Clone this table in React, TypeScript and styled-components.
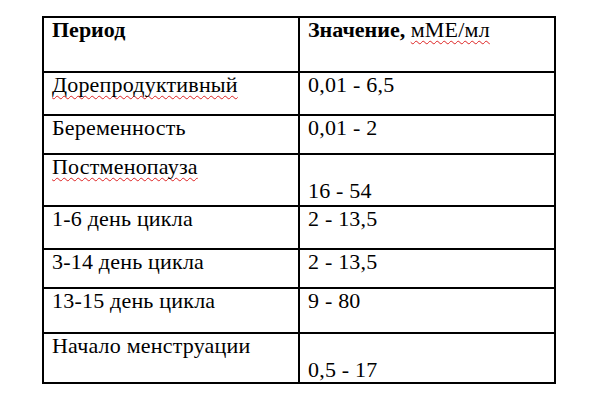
import React from 'react';
import styled, { createGlobalStyle } from 'styled-components';

const GlobalStyle = createGlobalStyle`
  html, body {
    margin: 0;
    padding: 0;
    background: #fff;
  }
  body {
    width: 600px;
    height: 400px;
    overflow: hidden;
    font-family: "Liberation Serif", "Times New Roman", serif;
  }
`;

const Page = styled.div`
  padding: 16px 0 0 42px;
`;

const Table = styled.table`
  border-collapse: collapse;
  width: 514px;
  table-layout: fixed;
  font-family: "Liberation Serif", "Times New Roman", serif;
  font-size: 22px;
  color: #000;
`;

const Row = styled.tr<{ $h: number }>`
  height: ${p => p.$h}px;
`;

const Cell = styled.td<{ $w?: number }>`
  border: 2px solid #000;
  vertical-align: top;
  padding: 0 8px;
  line-height: 24px;
  letter-spacing: 0.2px;
  white-space: nowrap;
  ${p => (p.$w ? `width: ${p.$w}px;` : '')}
`;

const HeadCell = styled(Cell)`
  font-weight: bold;
  letter-spacing: 0;
`;

const Light = styled.span`
  font-weight: normal;
  letter-spacing: 0.2px;
`;

const Misspelled = styled.span`
  text-decoration: underline wavy #d22;
  text-decoration-thickness: 1px;
  text-underline-offset: 3px;
  text-decoration-skip-ink: none;
`;

type Entry = { period: React.ReactNode; value: string; h: number; low?: boolean };

const rows: Entry[] = [
  { period: <Misspelled>Дорепродуктивный</Misspelled>, value: '0,01 - 6,5', h: 43 },
  { period: 'Беременность', value: '0,01 - 2', h: 39 },
  { period: <Misspelled>Постменопауза</Misspelled>, value: '16 - 54', h: 52, low: true },
  { period: '1-6 день цикла', value: '2 - 13,5', h: 43 },
  { period: '3-14 день цикла', value: '2 - 13,5', h: 39 },
  { period: '13-15 день цикла', value: '9 - 80', h: 45 },
  { period: 'Начало менструации', value: '0,5 - 17', h: 50, low: true },
];

export default function App() {
  return (
    <>
      <GlobalStyle />
      <Page>
        <Table>
          <tbody>
            <Row $h={55}>
              <HeadCell $w={238}>Период</HeadCell>
              <HeadCell>
                Значение, <Light><Misspelled>мМЕ/мл</Misspelled></Light>
              </HeadCell>
            </Row>
            {rows.map((r, i) => (
              <Row key={i} $h={r.h}>
                <Cell>{r.period}</Cell>
                <Cell>
                  {r.low && <br />}
                  {r.value}
                </Cell>
              </Row>
            ))}
          </tbody>
        </Table>
      </Page>
    </>
  );
}
